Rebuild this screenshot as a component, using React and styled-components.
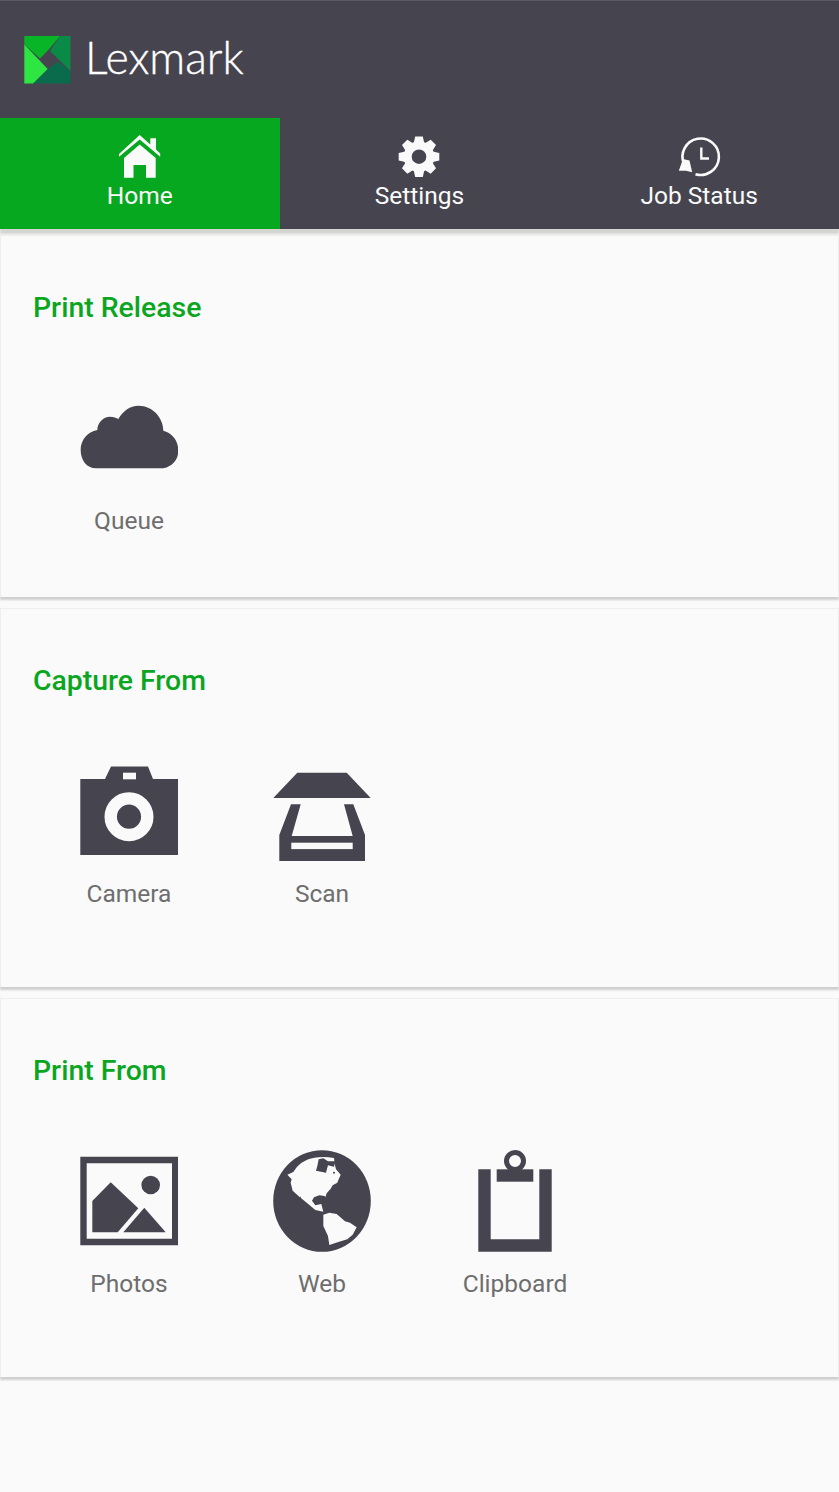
import React from 'react';
import styled, { createGlobalStyle } from 'styled-components';

const Global = createGlobalStyle`
  html, body { margin: 0; padding: 0; background: #fafafa; }
  body { font-family: Roboto, "Liberation Sans", sans-serif; }
`;

const Page = styled.div`
  width: 839px;
  height: 1492px;
  overflow: hidden;
  background: #fafafa;
  display: flex;
  flex-direction: column;
`;

const Header = styled.header`
  background: #46454f;
  border-top: 1px solid #5a5a62;
  display: flex;
  flex-direction: column;
  box-shadow: 0 5px 2px #d4d4d1;
  margin-bottom: 6px;
`;

const Brand = styled.div`
  height: 117px;
  display: flex;
  align-items: center;
  padding: 0 0 0 24px;
  gap: 14px;
  box-sizing: border-box;
`;

const Wordmark = styled.span`
  font-family: Lato, sans-serif;
  font-weight: 300;
  font-size: 44.6px;
  -webkit-text-stroke: 0.35px #fff;
  color: #fff;
  line-height: 1;
  position: relative;
  top: -2px;
`;

const Tabs = styled.nav`
  display: grid;
  grid-template-columns: repeat(3, 1fr);
  height: 111px;
`;

const Tab = styled.div`
  background: ${(p) => (p.$active ? '#06a81f' : 'transparent')};
  display: flex;
  flex-direction: column;
  align-items: center;
  color: #fafafa;
  padding-top: 14px;
  box-sizing: border-box;
  font-size: 24.5px;
  line-height: 30px;
`;

const TabIcon = styled.svg`
  width: 52px;
  height: 50px;
  display: block;
  margin-bottom: -1px;
`;

const Card = styled.section`
  height: ${(p) => p.$height}px;
  box-sizing: border-box;
  background: #fafafa;
  border: 1px solid #eeeeee;
  border-bottom: none;
  box-shadow: 0 3px 2px #cfcfcf;
  margin-bottom: 11px;
  padding: 55px 0 0 32px;
`;

const CardTitle = styled.h2`
  margin: 0;
  font-size: 28.4px;
  line-height: 34px;
  font-weight: 500;
  color: #0aa621;
`;

const Items = styled.div`
  display: flex;
  margin-top: 60px;
  margin-left: -1px;
`;

const Item = styled.div`
  width: 193px;
  display: flex;
  flex-direction: column;
  align-items: center;
`;

const ItemIcon = styled.svg`
  width: 98px;
  height: 104px;
  display: block;
  fill: #46454f;
`;

const ItemLabel = styled.span`
  margin-top: 17px;
  padding-left: 1px;
  font-size: 24.5px;
  line-height: 30px;
  color: #6e6e6e;
  white-space: nowrap;
`;

const LogoMark = styled.svg`
  width: 47px;
  height: 48px;
  display: block;
`;

const BG = '#fafafa';

const Logo = () => (
  <LogoMark viewBox="24 36 47 48">
    <polygon points="24.300,36 60,36 48.300,50 40,58.500 24.300,44.500" fill="#07b527" />
    <polygon points="60,36 70.500,36 70.500,71 50,51" fill="#0a8a47" />
    <polygon points="70.500,71 70.500,83.500 33,83.500 48.300,69 57.500,61.500" fill="#0a6a4c" />
    <polygon points="24.300,44.500 47.700,69 33,83.500 24.300,83.500" fill="#2ee642" />
  </LogoMark>
);

const HomeIcon = () => (
  <TabIcon viewBox="114 132 52 50">
    <path d="M139.700 135 L150.300 144.500 V138.300 H156 V149.500 L160.200 153.500 V156.700 L139.700 139.500 L119 156.700 V154 Z" fill="#fafafa" />
    <path d="M124 158 L139.700 144.500 L155.700 158 V177.700 H146 V165 H133.500 V177.700 H124 Z" fill="#fafafa" />
  </TabIcon>
);

const gearTeeth = [0, 45, 90, 135, 180, 225, 270, 315];

const GearIcon = () => (
  <TabIcon viewBox="393.300 132 52 50">
    <circle cx="419.300" cy="156.700" r="11.300" fill="none" stroke="#fafafa" strokeWidth="8" />
    {gearTeeth.map((a) => (
      <path key={a} d="M415.500 136.400 H423.100 L424.800 144 H413.800 Z" fill="#fafafa" transform={`rotate(${a} 419.300 156.700)`} />
    ))}
  </TabIcon>
);

const HistoryIcon = () => (
  <TabIcon viewBox="673.500 132 52 50">
    <path d="M684.500 164 A18.200 18.200 0 1 1 696 174.200" fill="none" stroke="#fafafa" strokeWidth="2.600" />
    <path d="M679.300 170.700 L683.500 159 L690 160.500 L692.700 172.300 L686.500 170.700 Z" fill="#fafafa" />
    <path d="M701.800 147.500 V158.500 H709.500" fill="none" stroke="#fafafa" strokeWidth="2.400" />
  </TabIcon>
);

const Cloud = () => (
  <ItemIcon viewBox="80 385 98 104">
    <g transform="translate(60 390) scale(0.3333)">
      <path d="M108 235 C80 235 62 210 62 180 C62 150 82 125 112 120 C112 98 130 80 150 80 C160 80 170 83 175 87 C190 62 210 47 235 47 C280 47 310 85 310 122 C338 130 355 152 355 182 C355 212 332 235 300 235 Z" />
    </g>
  </ItemIcon>
);

const Camera = () => (
  <ItemIcon viewBox="80 758 98 104">
    <path d="M80.300 779 H105 L111 766.500 H148 L153 779 H178.200 V855 H80.300 Z" />
    <rect x="123" y="772.700" width="13" height="6.600" fill={BG} />
    <circle cx="129" cy="816.700" r="18.300" fill="none" stroke={BG} strokeWidth="12.400" />
  </ItemIcon>
);

const Scan = () => (
  <ItemIcon viewBox="273 758 98 104">
    <path d="M297.300 772.700 H346.700 L370.700 798 H273.300 Z" />
    <path d="M291 804.300 H300.700 L291.700 836 H352.700 L344 804.300 H353.300 L365 835 V861 H279.300 V835 Z" />
    <rect x="291.300" y="842.700" width="61.400" height="6.400" fill={BG} />
  </ItemIcon>
);

const Photos = () => (
  <ItemIcon viewBox="80 1148 98 104">
    <path fillRule="evenodd" d="M80.300 1156.700 H178.300 V1245.300 H80.300 Z M86.700 1163.300 V1238.700 H172 V1163.300 Z" />
    <circle cx="150.700" cy="1185" r="9.300" />
    <path d="M92.300 1201 L110.700 1182.300 L138.300 1208.300 L117.700 1232.300 H92.300 Z" />
    <path d="M123.300 1232.300 L144.300 1207.700 L165.700 1232.300 Z" />
  </ItemIcon>
);

const Web = () => (
  <ItemIcon viewBox="273 1148 98 104">
    <ellipse cx="322" cy="1201" rx="48.800" ry="50.800" />
    <g transform="translate(260 1140) scale(0.3333)" fill={BG}>
      <path d="M82 104 L100 96 L110 82 C118 72 130 64 145 58 C160 52 190 48 222 54 L224 72 L228 88 L242 104 L236 118 L232 128 L218 136 L212 146 L200 160 L196 172 L203 184 L194 168 L178 166 L162 172 L156 182 L166 196 L184 192 L190 215 L166 210 L142 190 L118 170 L98 152 L92 128 L95 118 Z" />
      <path d="M190 224 L208 218 L230 222 L255 244 L270 248 L290 262 L278 284 L262 298 L235 306 L208 315 L204 288 L190 258 Z" />
    </g>
    <g transform="translate(260 1140) scale(0.3333)">
      <path d="M176 58 L190 55 L204 64 L226 64 L222 80 L204 76 L198 98 L168 92 L172 78 Z" />
      <circle cx="222" cy="98" r="3" />
      <circle cx="121" cy="172" r="2" />
    </g>
  </ItemIcon>
);

const Clipboard = () => (
  <ItemIcon viewBox="466 1148 98 104">
    <path d="M478.300 1169.300 H490.700 V1239.300 H539.300 V1169.300 H551.700 V1251.700 H478.300 Z" />
    <rect x="496.700" y="1169.300" width="36.600" height="12.400" />
    <circle cx="515" cy="1161" r="8.500" fill="none" stroke="#46454f" strokeWidth="5" />
  </ItemIcon>
);

const sections = [
  { title: 'Print Release', height: 362, items: [['Queue', Cloud]] },
  { title: 'Capture From', height: 379, items: [['Camera', Camera], ['Scan', Scan]] },
  { title: 'Print From', height: 379, items: [['Photos', Photos], ['Web', Web], ['Clipboard', Clipboard]] },
];

export default function App() {
  return (
    <Page>
      <Global />
      <Header>
        <Brand>
          <Logo />
          <Wordmark>Lexmark</Wordmark>
        </Brand>
        <Tabs>
          <Tab $active><HomeIcon />Home</Tab>
          <Tab><GearIcon />Settings</Tab>
          <Tab><HistoryIcon />Job Status</Tab>
        </Tabs>
      </Header>
      {sections.map((s) => (
        <Card key={s.title} $height={s.height}>
          <CardTitle>{s.title}</CardTitle>
          <Items>
            {s.items.map(([label, Icon]) => (
              <Item key={label}>
                <Icon />
                <ItemLabel>{label}</ItemLabel>
              </Item>
            ))}
          </Items>
        </Card>
      ))}
    </Page>
  );
}
